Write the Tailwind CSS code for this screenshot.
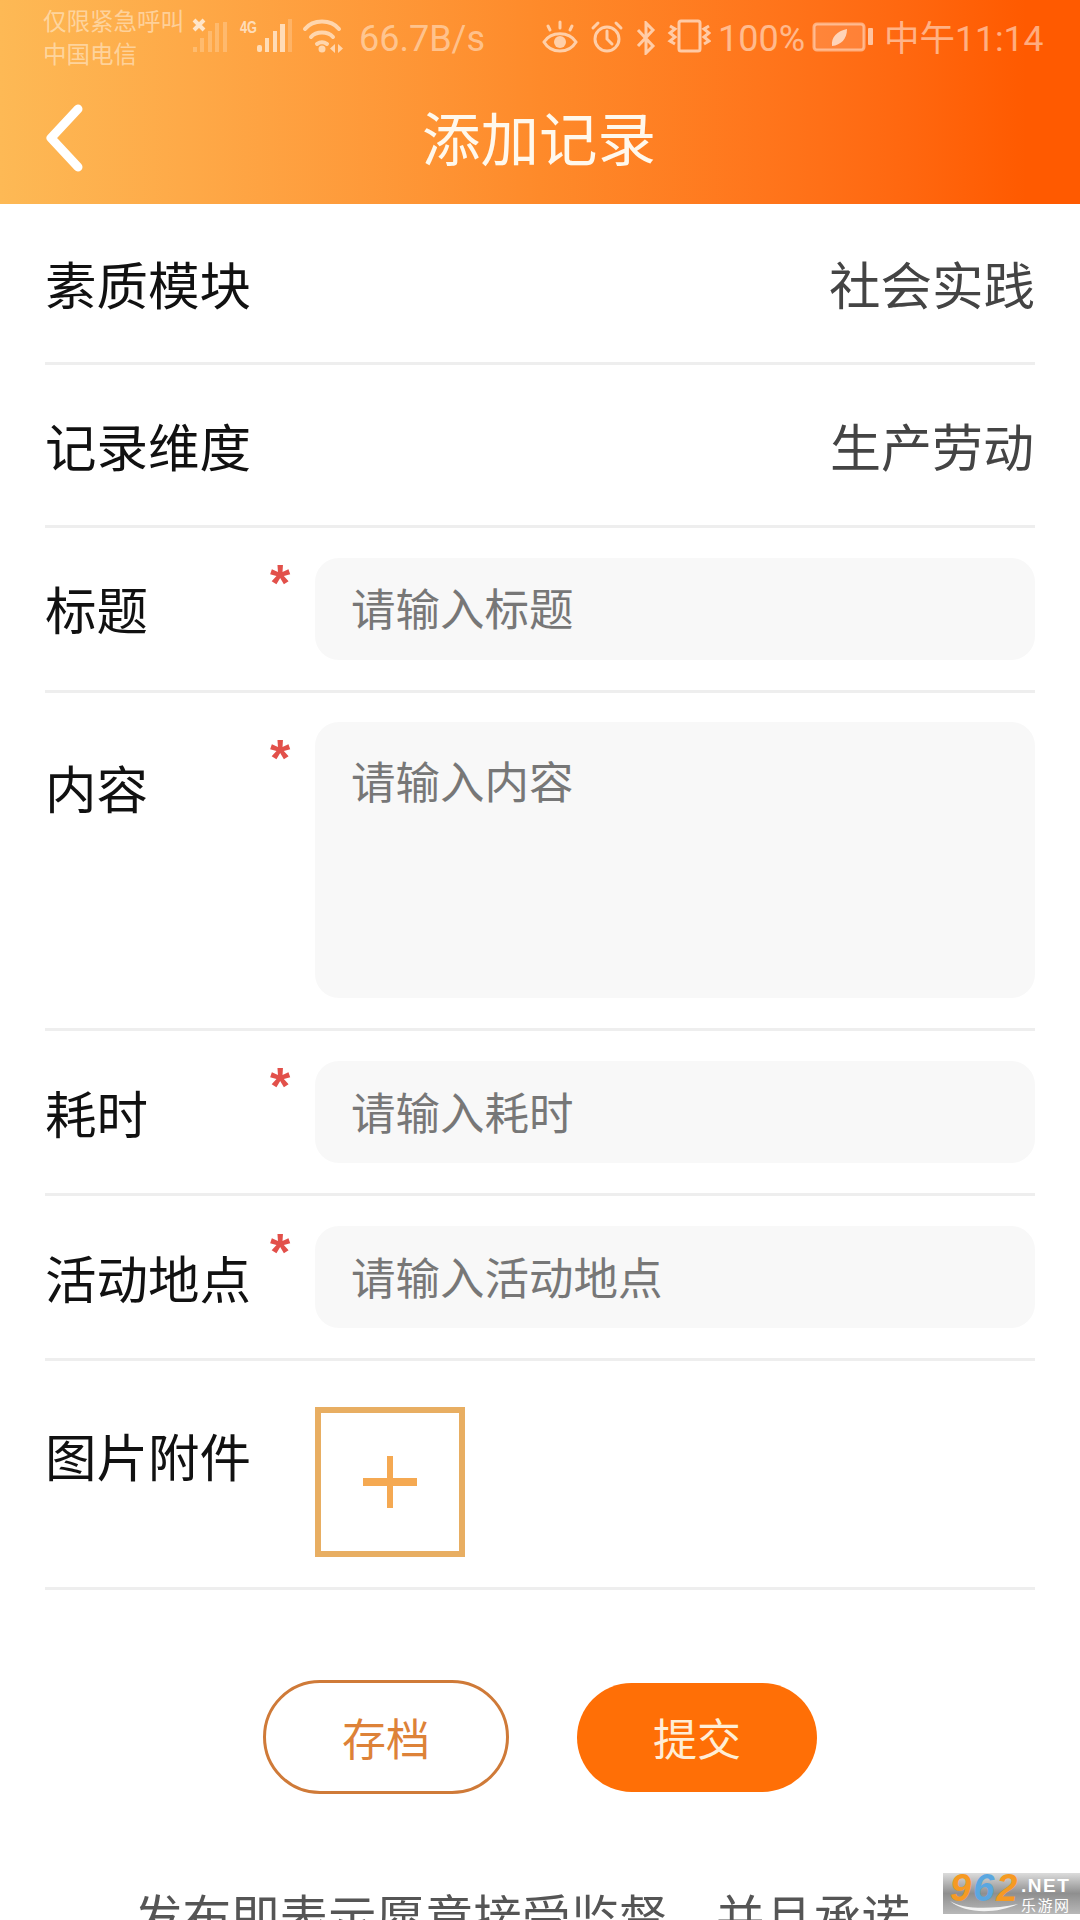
<!DOCTYPE html>
<html lang="zh">
<head>
<meta charset="utf-8">
<script src="https://cdn.jsdelivr.net/npm/@tailwindcss/browser@4"></script>
</head>
<body class="bg-white">
<div class="relative w-[1080px] h-[1920px] overflow-hidden bg-white font-['Noto_Sans_CJK_SC','Noto_Sans',sans-serif]">
  <header class="h-[204px] bg-gradient-to-r from-[#fdb955] via-[#fe8a2a] via-50% to-[#ff5a00] to-95% flex flex-col">
    <div class="h-[72px] flex items-start text-white/45">
      <div class="ml-[43px] w-[148px] pt-[4px] text-[23.5px] leading-[33px] whitespace-nowrap">
        <div>仅限紧急呼叫</div>
        <div>中国电信</div>
      </div>
      <svg class="mt-[18px]" width="110" height="36" viewBox="0 0 110 36" fill="none">
        <path d="M3 2l10 10M13 2L3 12" stroke="#fff" stroke-opacity=".7" stroke-width="4"/>
        <g fill="#fff" fill-opacity=".22"><rect x="2" y="29" width="4" height="5"/><rect x="9" y="20" width="4" height="14"/><rect x="17" y="13" width="4" height="21"/><rect x="24" y="5" width="4" height="29"/><rect x="32" y="4" width="4" height="30"/></g>
        <text x="49" y="15" font-family="Liberation Sans" font-size="17" font-weight="700" fill="#fff" fill-opacity=".65" textLength="17" lengthAdjust="spacingAndGlyphs">4G</text>
        <g fill="#fff" fill-opacity=".62"><rect x="66" y="27" width="5" height="7" rx="2"/><rect x="74" y="20" width="4" height="14"/><rect x="82" y="13" width="4" height="21"/><rect x="89" y="6" width="5" height="28"/></g>
        <rect x="97" y="1" width="4" height="33" fill="#fff" fill-opacity=".2"/>
      </svg>
      <svg class="ml-[1px] mt-[16px]" width="42" height="38" viewBox="0 0 42 38" fill="none" stroke="#fff" stroke-opacity=".58" stroke-width="4" stroke-linecap="round">
        <path d="M3 13C11 3 29 3 37 13"/><path d="M9 21c5-6 17-6 22 0"/><path d="M15 28c3-2 7-2 10 0"/>
        <circle cx="20" cy="33" r="3.5" fill="#fff" fill-opacity=".58" stroke="none"/>
        <path d="M33 28l-5 4.500 5 4.500zM36 28l5 4.500-5 4.500z" fill="#fff" fill-opacity=".58" stroke="none"/>
      </svg>
      <div class="ml-[15px] w-[140px] pt-[15px] text-[36px] leading-[48px] font-['Roboto'] whitespace-nowrap text-white/45">66.7B/s</div>
      <div class="ml-auto flex items-center h-[72px]">
        <svg class="mt-[1px]" width="38" height="34" viewBox="0 0 38 34" fill="none" stroke="#fff" stroke-opacity=".6" stroke-width="3" stroke-linecap="round">
          <path d="M3 22C10 11 28 11 35 22 28 34 10 34 3 22z"/><circle cx="19" cy="22" r="6" fill="#fff" fill-opacity=".6" stroke="none"/>
          <path d="M9 10L7 6M19 8V2M29 10l2-4"/>
        </svg>
        <svg class="ml-[11px] mt-[1px]" width="34" height="34" viewBox="0 0 34 34" fill="none" stroke="#fff" stroke-opacity=".6" stroke-width="3" stroke-linecap="round">
          <circle cx="17" cy="19" r="12"/><path d="M17 11v8l5 5M3 8l5-5M31 8l-5-5"/>
        </svg>
        <svg class="ml-[12px] mt-[3px]" width="20" height="34" viewBox="0 0 20 34" fill="none" stroke="#fff" stroke-opacity=".6" stroke-width="3">
          <path d="M2 9l15 16-7 7V2l7 7L2 25"/>
        </svg>
        <svg class="ml-[11px]" width="44" height="34" viewBox="0 0 44 34" fill="none" stroke="#fff" stroke-opacity=".6" stroke-width="3">
          <rect x="12" y="2" width="21" height="30" rx="2"/>
          <path d="M3 7l5 3-5 4 5 4-5 4 5 3M42 7l-5 3 5 4-5 4 5 4-5 3"/>
        </svg>
        <div class="ml-[7px] mt-[5px] w-[86px] text-[36px] leading-[48px] font-['Roboto'] whitespace-nowrap text-white/50">100%</div>
        <svg class="ml-[8px] mt-[1px]" width="62" height="30" viewBox="0 0 62 30" fill="none">
          <rect x="2" y="2" width="50" height="26" rx="3" stroke="#fff" stroke-opacity=".45" stroke-width="3" fill="#fff" fill-opacity=".15"/>
          <rect x="56" y="6" width="5" height="17" rx="1" fill="#fff" fill-opacity=".6"/>
          <path d="M20 24c-1-9 5-15 15-17 0 10-6 16-15 17z" fill="#fff" fill-opacity=".65"/>
        </svg>
        <div class="ml-[10px] mr-[37px] mt-[5px] w-[159px] text-[35.5px] leading-[48px] font-['Roboto','Noto_Sans_CJK_SC'] whitespace-nowrap text-white/50">中午11:14</div>
      </div>
    </div>
    <div class="grid grid-cols-[1fr_auto_1fr] items-center h-[132px]">
      <svg class="ml-[45px] mb-[1px]" width="40" height="68" viewBox="0 0 40 68" fill="none" stroke="#fff" stroke-width="9" stroke-linecap="round" stroke-linejoin="round">
        <path d="M33 5L6 34l27 29"/>
      </svg>
      <h1 class="text-[58.5px] leading-[80px] font-normal text-[#fff8ec] mb-[5px] mr-[2px]">添加记录</h1>
    </div>
  </header>

  <main class="mx-[45px] text-[#111] text-[51.5px] leading-[70px]">
    <div class="h-[161px] border-b-[3px] border-[#eeeeee] flex items-center justify-between">
      <span>素质模块</span><span class="text-[#444]">社会实践</span>
    </div>
    <div class="h-[163px] border-b-[3px] border-[#eeeeee] flex items-center justify-between pb-[1px]">
      <span>记录维度</span><span class="text-[#444] text-[51px] mr-[1px]">生产劳动</span>
    </div>
    <div class="h-[165px] border-b-[3px] border-[#eeeeee] flex items-center">
      <span class="w-[225px] mb-[2px]">标题</span>
      <span class="w-[45px] self-start mt-[28px] text-[#e2504a] font-bold font-['Liberation_Sans'] text-[52px] leading-[54px]">*</span>
      <div class="flex-1 h-[102px] rounded-[24px] bg-[#f8f8f8] pl-[36px] pb-[5px] flex items-center text-[44.5px] leading-[60px] text-[#777]">请输入标题</div>
    </div>
    <div class="h-[338px] border-b-[3px] border-[#eeeeee] flex pt-[29px]">
      <span class="w-[225px] mt-[30px]">内容</span>
      <span class="w-[45px] mt-[9px] text-[#e2504a] font-bold font-['Liberation_Sans'] text-[52px] leading-[54px]">*</span>
      <div class="flex-1 h-[276px] rounded-[24px] bg-[#f8f8f8] pl-[36px] pt-[28px] text-[44.5px] leading-[60px] text-[#777]">请输入内容</div>
    </div>
    <div class="h-[165px] border-b-[3px] border-[#eeeeee] flex items-center">
      <span class="w-[225px]">耗时</span>
      <span class="w-[45px] self-start mt-[28px] text-[#e2504a] font-bold font-['Liberation_Sans'] text-[52px] leading-[54px]">*</span>
      <div class="flex-1 h-[102px] rounded-[24px] bg-[#f8f8f8] pl-[36px] pb-[2px] flex items-center text-[44.5px] leading-[60px] text-[#777]">请输入耗时</div>
    </div>
    <div class="h-[165px] border-b-[3px] border-[#eeeeee] flex items-center">
      <span class="w-[225px] whitespace-nowrap">活动地点</span>
      <span class="w-[45px] self-start mt-[29px] text-[#e2504a] font-bold font-['Liberation_Sans'] text-[52px] leading-[54px]">*</span>
      <div class="flex-1 h-[102px] rounded-[24px] bg-[#f8f8f8] pl-[36px] pb-[2px] flex items-center text-[44.5px] leading-[60px] text-[#777]">请输入活动地点</div>
    </div>
    <div class="h-[229px] border-b-[3px] border-[#eeeeee] flex pt-[46px]">
      <span class="w-[270px] whitespace-nowrap mt-[13px]">图片附件</span>
      <div class="w-[150px] h-[150px] border-[6px] border-[#e8ae62] flex items-center justify-center">
        <svg width="54" height="52" viewBox="0 0 54 52" fill="#f5a952"><rect x="24" y="0" width="6" height="52"/><rect x="0" y="22" width="54" height="8"/></svg>
      </div>
    </div>
  </main>

  <div class="flex items-center mt-[90px] ml-[263px]">
    <button class="w-[246px] h-[114px] rounded-full border-[3px] border-[#cf7a38] text-[#dd8238] text-[44px] leading-[60px]">存档</button>
    <button class="ml-[68px] w-[240px] h-[109px] rounded-full bg-[#ff6f06] text-[#ffeed6] text-[44px] leading-[60px]">提交</button>
  </div>

  <p class="mt-[88px] ml-[134px] text-[48.5px] leading-[66px] text-[#555] whitespace-nowrap">发布即表示愿意接受监督，并且承诺</p>

  <div class="absolute right-0 bottom-[6px] w-[137px] h-[41px] bg-gradient-to-b from-[#dcdcdc] via-[#8f8f8f] to-[#b8b8b8] flex pl-[7px] font-['Liberation_Sans']">
    <div class="w-[71px] text-[38px] leading-[30px] font-bold italic tracking-[2px] whitespace-nowrap">
      <span class="text-[#f59a23]">9</span><span class="text-[#5aa7e0]">6</span><span class="text-[#f59a23]">2</span>
    </div>
    <div class="flex flex-col items-start text-white whitespace-nowrap">
      <span class="text-[19px] leading-[22px] mt-[2px] font-bold tracking-[1.5px]">.NET</span>
      <span class="text-[15px] leading-[16px] tracking-[1.5px] font-['Noto_Sans_CJK_SC']">乐游网</span>
    </div>
    <svg class="absolute left-[6px] bottom-[1px]" width="70" height="13" viewBox="0 0 70 13" fill="#fff" fill-opacity=".85"><path d="M1 1c12 8 40 9 68 3C48 14 16 14 1 1z"/></svg>
  </div>
</div>
</body>
</html>
